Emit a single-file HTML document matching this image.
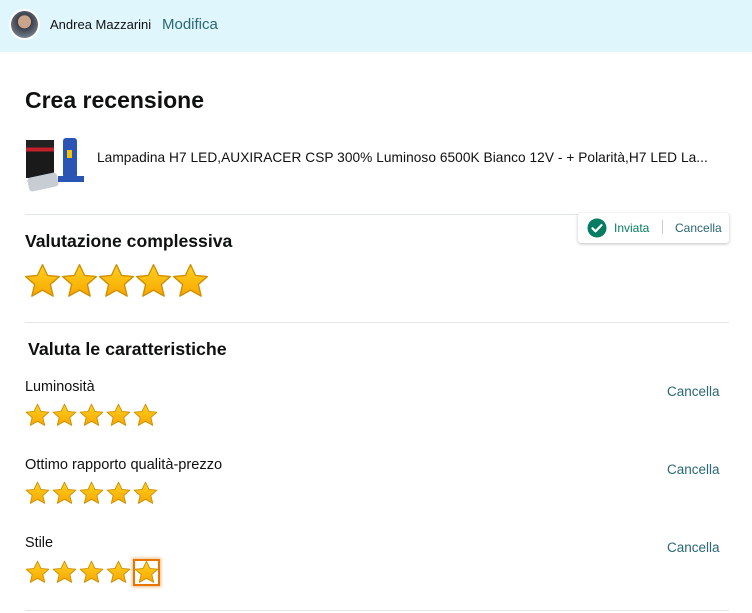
<!DOCTYPE html>
<html><head><meta charset="utf-8"><style>
*{margin:0;padding:0;box-sizing:border-box}
body{width:752px;height:613px;background:#fff;font-family:"Liberation Sans",sans-serif;color:#0f1111;position:relative;overflow:hidden}
.a{position:absolute;white-space:nowrap}
.hr{position:absolute;left:25px;width:704px;height:1px;background:#e3e6e6}
.link{color:#2a6775}
svg.s{position:absolute}
</style></head><body>
<svg width="0" height="0" style="position:absolute"><defs>
<linearGradient id="g" x1="0" y1="0" x2="0" y2="1"><stop offset="0" stop-color="#ffd21f"/><stop offset="1" stop-color="#f7a600"/></linearGradient>
<symbol id="st" viewBox="0 0 24 24"><path d="M12 1.1l3.3 7 7.6.7-5.8 5.1 1.8 7.6L12 17.6l-6.9 3.9 1.8-7.6L1.1 8.8l7.6-.7z" fill="url(#g)" stroke="#d08f00" stroke-width="0.9" stroke-linejoin="round"/></symbol>
</defs></svg>

<div class="a" style="left:0;top:0;width:752px;height:52px;background:#dff6fc"></div>
<div class="a" style="left:9px;top:9px;width:31px;height:31px;border-radius:50%;background:#fff;padding:2px"><div style="width:27px;height:27px;border-radius:50%;background:radial-gradient(circle at 50% 40%,#c9a48a 0 30%,#3a3f4a 32%,#6a7480 70%,#b8c0c8 100%)"></div></div>
<div class="a" style="left:50px;top:17px;font-size:13px;color:#0f1111">Andrea Mazzarini</div>
<div class="a link" style="left:162px;top:16px;font-size:15px">Modifica</div>

<div class="a" style="left:25px;top:87px;font-size:23px;font-weight:bold">Crea recensione</div>

<div class="a" style="left:26px;top:140px;width:28px;height:38px;background:linear-gradient(#222 0 20%,#c0202a 20% 30%,#1a1a1a 30%);"></div>
<div class="a" style="left:28px;top:175px;width:30px;height:14px;background:#c8cdd3;border-radius:3px;transform:rotate(-12deg)"></div>
<div class="a" style="left:63px;top:138px;width:14px;height:40px;background:#2a55b5;border-radius:3px"></div>
<div class="a" style="left:67px;top:150px;width:5px;height:8px;background:#f5c400"></div>
<div class="a" style="left:58px;top:176px;width:26px;height:6px;background:#2a55b5"></div>
<div class="a" style="left:97px;top:150px;font-size:13.7px;letter-spacing:0.05px">Lampadina H7 LED,AUXIRACER CSP 300% Luminoso 6500K Bianco 12V - + Polarità,H7 LED La...</div>

<div class="hr" style="top:214px"></div>
<div class="a" style="left:578px;top:213px;width:151px;height:30px;background:#fff;border-radius:3px;box-shadow:0 1px 3px rgba(0,0,0,.25)"></div>
<svg class="s" style="left:587px;top:218px" width="20" height="20" viewBox="0 0 20 20"><circle cx="10" cy="10" r="9.5" fill="#067d62"/><path d="M5.5 10.3l3 3 6-6.2" fill="none" stroke="#fff" stroke-width="2.2" stroke-linecap="round" stroke-linejoin="round"/></svg>
<div class="a" style="left:614px;top:221px;font-size:12px;color:#067d62">Inviata</div>
<div class="a" style="left:662px;top:220px;width:1px;height:14px;background:#ccc"></div>
<div class="a link" style="left:675px;top:221px;font-size:12px">Cancella</div>

<div class="a" style="left:25px;top:231px;font-size:17.6px;font-weight:bold">Valutazione complessiva</div>
<svg class="s" style="left:24px;top:263px" width="37" height="37"><use href="#st"/></svg>
<svg class="s" style="left:61px;top:263px" width="37" height="37"><use href="#st"/></svg>
<svg class="s" style="left:98px;top:263px" width="37" height="37"><use href="#st"/></svg>
<svg class="s" style="left:135px;top:263px" width="37" height="37"><use href="#st"/></svg>
<svg class="s" style="left:172px;top:263px" width="37" height="37"><use href="#st"/></svg>

<div class="hr" style="top:322px"></div>
<div class="a" style="left:28px;top:339px;font-size:17.8px;font-weight:bold">Valuta le caratteristiche</div>

<div class="a" style="left:25px;top:379px;font-size:14.4px">Luminosità</div>
<div class="a link" style="left:667px;top:384px;font-size:13.5px">Cancella</div>
<svg class="s" style="left:25px;top:403px" width="25" height="25"><use href="#st"/></svg>
<svg class="s" style="left:52px;top:403px" width="25" height="25"><use href="#st"/></svg>
<svg class="s" style="left:79px;top:403px" width="25" height="25"><use href="#st"/></svg>
<svg class="s" style="left:106px;top:403px" width="25" height="25"><use href="#st"/></svg>
<svg class="s" style="left:133px;top:403px" width="25" height="25"><use href="#st"/></svg>

<div class="a" style="left:25px;top:457px;font-size:14.6px">Ottimo rapporto qualità-prezzo</div>
<div class="a link" style="left:667px;top:462px;font-size:13.5px">Cancella</div>
<svg class="s" style="left:25px;top:481px" width="25" height="25"><use href="#st"/></svg>
<svg class="s" style="left:52px;top:481px" width="25" height="25"><use href="#st"/></svg>
<svg class="s" style="left:79px;top:481px" width="25" height="25"><use href="#st"/></svg>
<svg class="s" style="left:106px;top:481px" width="25" height="25"><use href="#st"/></svg>
<svg class="s" style="left:133px;top:481px" width="25" height="25"><use href="#st"/></svg>

<div class="a" style="left:25px;top:535px;font-size:14.4px">Stile</div>
<div class="a link" style="left:667px;top:540px;font-size:13.5px">Cancella</div>
<svg class="s" style="left:25px;top:560px" width="25" height="25"><use href="#st"/></svg>
<svg class="s" style="left:52px;top:560px" width="25" height="25"><use href="#st"/></svg>
<svg class="s" style="left:79px;top:560px" width="25" height="25"><use href="#st"/></svg>
<svg class="s" style="left:106px;top:560px" width="25" height="25"><use href="#st"/></svg>
<div class="a" style="left:133px;top:559px;width:27px;height:27px;border:2px solid #e77600;box-shadow:0 0 3px 1px rgba(228,121,17,.5)"></div>
<svg class="s" style="left:134px;top:560px" width="25" height="25"><use href="#st"/></svg>

<div class="hr" style="top:610px"></div>
</body></html>
